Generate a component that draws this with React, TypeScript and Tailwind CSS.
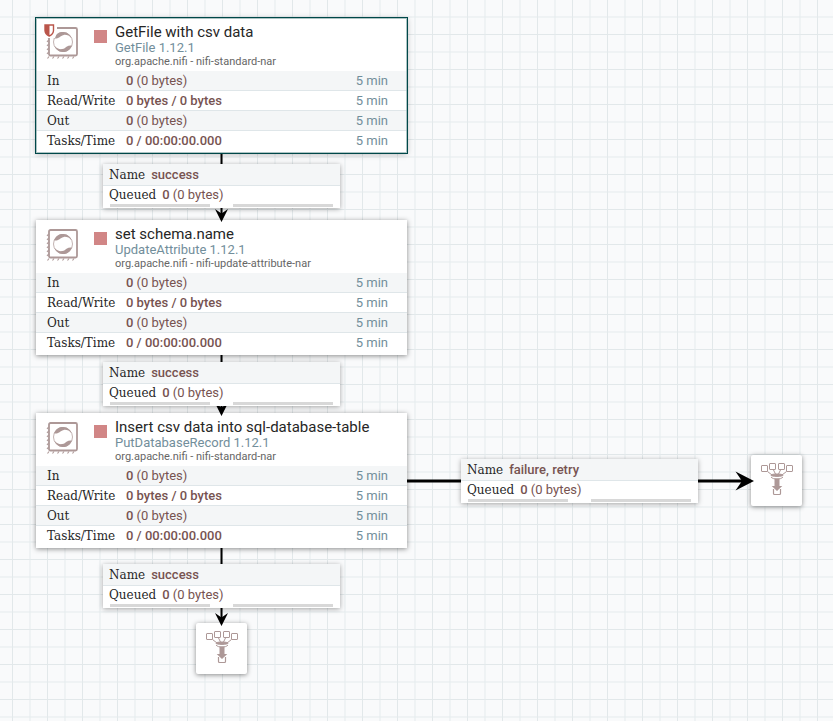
import React from "react";

type Processor = {
  name: string;
  type: string;
  bundle: string;
  place: string;
  selected?: boolean;
  restricted?: boolean;
};

type Connection = { name: string; place: string };

const processors: Processor[] = [
  {
    name: "GetFile with csv data",
    type: "GetFile 1.12.1",
    bundle: "org.apache.nifi - nifi-standard-nar",
    place: "left-[36px] top-[18px]",
    selected: true,
    restricted: true,
  },
  {
    name: "set schema.name",
    type: "UpdateAttribute 1.12.1",
    bundle: "org.apache.nifi - nifi-update-attribute-nar",
    place: "left-[36px] top-[220px]",
  },
  {
    name: "Insert csv data into sql-database-table",
    type: "PutDatabaseRecord 1.12.1",
    bundle: "org.apache.nifi - nifi-standard-nar",
    place: "left-[36px] top-[413px]",
  },
];

const connections: Connection[] = [
  { name: "success", place: "left-[103px] top-[164px]" },
  { name: "success", place: "left-[103px] top-[362px]" },
  { name: "success", place: "left-[103px] top-[564px]" },
  { name: "failure, retry", place: "left-[461px] top-[459px]" },
];

const stats = [
  { label: "In", strong: "0", rest: " (0 bytes)" },
  { label: "Read/Write", strong: "0 bytes / 0 bytes", rest: "" },
  { label: "Out", strong: "0", rest: " (0 bytes)" },
  { label: "Tasks/Time", strong: "0 / 00:00:00.000", rest: "" },
];

function ProcessorIcon({ restricted }: { restricted?: boolean }) {
  return (
    <svg width="36" height="36" viewBox="0 0 36 36" fill="none" aria-hidden="true">
      <rect x="5" y="4" width="28" height="27.500" rx="1.500" stroke="#ad9897" strokeWidth="1.800" />
      <path
        d="M4.500 8l-1.500 2M4.500 12l-1.500 2M4.500 16l-1.500 2M4.500 20l-1.500 2M4.500 24l-1.500 2M4.500 28l-1.500 2M5 32.500l-1.500 2M10 32.500l-1.500 2M15 32.500l-1.500 2M20 32.500l-1.500 2M25 32.500l-1.500 2M30 32.500l-1.500 2"
        stroke="#ad9897"
        strokeWidth="1.100"
      />
      <circle cx="19" cy="18" r="9.500" stroke="#c3b3b2" strokeWidth="1" />
      <path d="M10 14.500C12 9.500 15.500 7.800 19.500 8c4 .3 7 2.800 8.300 6.500-2.500-3-5.300-4-8-3.600-2.300.4-2.800 1.300-4.300 2.400C13.800 14.500 12 14.800 10 14.500z" fill="#ad9897" />
      <path d="M28 21.500C26 26.500 22.500 28.200 18.500 28c-4-.3-7-2.800-8.300-6.500 2.500 3 5.300 4 8 3.600 2.300-.4 2.800-1.300 4.300-2.400C24.200 21.500 26 21.200 28 21.500z" fill="#ad9897" />
      {restricted && (
        <>
          <path d="M0 0h13v9l-2 5H0z" fill="#fff" />
          <path d="M1 1h8.500v5.500c0 2.800-1.700 4.300-4.250 5.500C2.700 10.800 1 9.300 1 6.500z" fill="#fff" stroke="#ba554a" strokeWidth="1.400" />
          <path d="M1 1h4.500v11C2.700 10.800 1 9.300 1 6.500z" fill="#ba554a" />
        </>
      )}
    </svg>
  );
}

function FunnelIcon() {
  return (
    <svg width="36" height="36" viewBox="0 0 36 36" fill="none" stroke="#ad9897" aria-hidden="true">
      <rect x="2.500" y="4.500" width="6" height="6" rx="0.500" />
      <rect x="10.500" y="2.500" width="6" height="6" rx="0.500" />
      <rect x="19.500" y="2.500" width="6" height="6" rx="0.500" />
      <rect x="27.500" y="4.500" width="6" height="6" rx="0.500" />
      <path d="M8.500 10.500l4.500 3.500M14.500 9l2 4M21.500 9l-2 4M27.500 10.500l-4.500 3.500" />
      <ellipse cx="18" cy="14.200" rx="6" ry="1.200" fill="#ad9897" />
      <path d="M12 16c1.500 1.500 3 2 6 2s4.500-.5 6-2" />
      <path d="M15.500 17.500h5V25h2.800L18 30l-5.300-5h2.800z" fill="#ad9897" stroke="none" />
      <path d="M14.500 28v4.500q0 1 1 1h5q1 0 1-1V28" strokeWidth="1.200" />
    </svg>
  );
}

function ProcessorCard({ processor }: { processor: Processor }) {
  const frame = processor.selected
    ? "shadow-[0_0_0_1px_#004849,0_1px_6px_rgba(0,0,0,0.3)] after:pointer-events-none after:absolute after:inset-0 after:border after:border-[#8aabab]/70"
    : "shadow-[0_1px_5px_rgba(0,0,0,0.45)]";
  return (
    <article className={`absolute h-[135px] w-[371px] bg-white ${processor.place} ${frame}`}>
      <header className="flex h-[53px]">
        <div className="w-[58px] pt-[6px] pl-2">
          <ProcessorIcon restricted={processor.restricted} />
        </div>
        <div className="mt-3 mr-2 size-[13px] bg-[#d18686]" />
        <div className="pt-[5px]">
          <h2 className="text-[15px] leading-[18px] whitespace-nowrap text-[#262626]">{processor.name}</h2>
          <p className="text-[13px] leading-[14px] text-[#728e9b]">{processor.type}</p>
          <p className="text-[11px] leading-[13px] text-[#666666]">{processor.bundle}</p>
        </div>
      </header>
      <table className="w-full border-separate border-spacing-0 text-[13px] leading-[18px] text-[#775351]">
        <tbody>
          {stats.map((s) => (
            <tr key={s.label} className="group odd:bg-[#f4f6f7]">
              <th scope="row" className="h-5 w-[90px] border-b border-[#dfe6e9] p-0 pl-[11px] text-left font-['DejaVu_Serif',serif] text-[12px] font-normal text-[#262626] group-last:border-b-0">
                {s.label}
              </th>
              <td className="border-b border-[#dfe6e9] p-0 group-last:border-b-0">
                <b className="font-medium">{s.strong}</b>
                {s.rest}
              </td>
              <td className="border-b border-[#dfe6e9] p-0 pr-[19px] text-right text-[#728e9b] group-last:border-b-0">5 min</td>
            </tr>
          ))}
        </tbody>
      </table>
    </article>
  );
}

function ConnectionLabel({ connection }: { connection: Connection }) {
  return (
    <dl className={`absolute h-11 w-[237px] bg-white text-[13px] text-[#775351] shadow-[0_1px_5px_rgba(0,0,0,0.35)] ${connection.place}`}>
      <div className="flex h-[22px] items-center gap-[6px] border-b border-[#dfe6e9] bg-[#f4f6f7] pl-[6px]">
        <dt className="font-['DejaVu_Serif',serif] text-[12px] text-[#262626]">Name</dt>
        <dd className="font-medium">{connection.name}</dd>
      </div>
      <div className="flex h-[18px] items-center gap-[6px] pl-[6px]">
        <dt className="font-['DejaVu_Serif',serif] text-[12px] text-[#262626]">Queued</dt>
        <dd>
          <b className="font-medium">0</b> (0 bytes)
        </dd>
      </div>
      <div className="flex justify-between px-[7px]">
        <div className="h-[3px] w-[100px] bg-[#d8d8d8]" />
        <div className="h-[3px] w-[100px] bg-[#d8d8d8]" />
      </div>
    </dl>
  );
}

function Funnel({ place }: { place: string }) {
  return (
    <div className={`absolute flex size-[51px] justify-center rounded-[2px] bg-white pt-[6px] shadow-[0_1px_5px_rgba(0,0,0,0.45)] ${place}`}>
      <FunnelIcon />
    </div>
  );
}

function Arrows() {
  return (
    <svg className="absolute top-0 left-0" width="833" height="721" viewBox="0 0 833 721" aria-hidden="true">
      <g stroke="#000" strokeWidth="2">
        <path d="M221.500 154V216M221.500 355V410M221.500 548V619" />
        <path d="M407 481H745" strokeWidth="3" />
      </g>
      <path d="M221.500 222l-6.500-13 6.500 4.500 6.500-4.500z" />
      <path d="M221.500 416l-6.500-13 6.500 4.500 6.500-4.500z" />
      <path d="M221.500 626l-6.500-13 6.500 4.500 6.500-4.500z" />
      <path d="M754 481l-18.500-9.500 6.500 9.500-6.500 9.500z" />
    </svg>
  );
}

export default function App() {
  return (
    <main className="relative min-h-screen overflow-hidden bg-[#f9fafb] font-['Roboto',sans-serif]">
      <svg className="absolute inset-0 size-full" aria-hidden="true">
        <defs>
          <pattern id="grid" width="35" height="35" patternUnits="userSpaceOnUse">
            <path d="M12.500 0V35M0 34.500H35" stroke="#e2e8ea" />
            <path d="M30 0V35M0 17H35" stroke="#e5ebed" />
          </pattern>
        </defs>
        <rect width="100%" height="100%" fill="url(#grid)" />
      </svg>
      {processors.map((p) => (
        <ProcessorCard key={p.name} processor={p} />
      ))}
      <Funnel place="left-[196px] top-[623px]" />
      <Funnel place="left-[751px] top-[455px]" />
      <Arrows />
      {connections.map((c) => (
        <ConnectionLabel key={c.place} connection={c} />
      ))}
    </main>
  );
}
